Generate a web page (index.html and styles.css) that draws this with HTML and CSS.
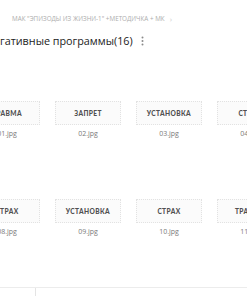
FILE: index.html
```html
<!doctype html>
<html lang="ru">
<head>
  <meta charset="UTF-8">
  <meta name="viewport" content="width=device-width, initial-scale=1">
  <title>Негативные программы</title>
  <link rel="stylesheet" href="styles.css">
</head>
<body>
  <nav class="crumbs">
    <span>МАК "Эпизоды из жизни-1" +методичка + МК</span>
    <span class="crumbs-sep">›</span>
  </nav>
  <div class="title-row">
    <h1>Негативные программы(16)</h1>
    <span class="kebab">
      <svg width="3" height="10" viewBox="0 0 3 10"><circle cx="1.5" cy="1.5" r="1"/><circle cx="1.5" cy="5" r="1"/><circle cx="1.5" cy="8.5" r="1"/></svg>
    </span>
  </div>
  <div class="file-grid">
    <div class="file"><div class="thumb">Травма</div><p>01.jpg</p></div>
    <div class="file"><div class="thumb">Запрет</div><p>02.jpg</p></div>
    <div class="file"><div class="thumb">Установка</div><p>03.jpg</p></div>
    <div class="file"><div class="thumb">Страх</div><p>04.jpg</p></div>
    <div class="file"><div class="thumb">Запрет</div><p>05.jpg</p></div>
    <div class="file"><div class="thumb">Травма</div><p>06.jpg</p></div>
    <div class="file"><div class="thumb">Установка</div><p>07.jpg</p></div>
    <div class="file"><div class="thumb">Страх</div><p>08.jpg</p></div>
    <div class="file"><div class="thumb">Установка</div><p>09.jpg</p></div>
    <div class="file"><div class="thumb">Страх</div><p>10.jpg</p></div>
    <div class="file"><div class="thumb">Травма</div><p>11.jpg</p></div>
    <div class="file"><div class="thumb">Запрет</div><p>12.jpg</p></div>
    <div class="file"><div class="thumb">Установка</div><p>13.jpg</p></div>
    <div class="file"><div class="thumb">Страх</div><p>14.jpg</p></div>
  </div>
  <footer class="bottom-bar">
    <div class="bottom-cell"></div>
  </footer>
</body>
</html>
```

FILE: styles.css
```css
body {
  margin: 0;
  padding: 0;
  width: 247px;
  height: 296px;
  overflow: hidden;
  background: #fff;
  font-family: "Open Sans", Arial, sans-serif;
  color: #222;
}

h1, p {
  margin: 0;
}

.crumbs {
  display: flex;
  align-items: center;
  gap: 5px;
  padding: 13px 0 0 12px;
  height: 11px;
  font-size: 6.3px;
  line-height: 11px;
  text-transform: uppercase;
  color: #adadad;
  white-space: nowrap;
}

.crumbs-sep {
  color: #cfcfcf;
  font-size: 8px;
}

.title-row {
  display: flex;
  align-items: center;
  gap: 8px;
  margin: 9px 0 0 -14px;
  height: 16px;
}

.title-row h1 {
  font-size: 10.8px;
  font-weight: 500;
  line-height: 16px;
  color: #222;
  white-space: nowrap;
}

.kebab {
  display: flex;
  fill: #8a8a8a;
}

.file-grid {
  display: grid;
  grid-template-columns: repeat(7, 66px);
  column-gap: 15px;
  row-gap: 60px;
  margin: 52px 0 0 -26px;
}

.file {
  display: flex;
  flex-direction: column;
  align-items: center;
  gap: 3px;
}

.thumb {
  box-sizing: border-box;
  width: 66px;
  height: 24px;
  display: flex;
  align-items: center;
  justify-content: center;
  border: 1px dotted #e2e2e2;
  background: #fbfbfb;
  font-family: Lato, Arial, sans-serif;
  font-weight: 900;
  font-size: 6.6px;
  letter-spacing: 0.4px;
  text-transform: uppercase;
  color: #505050;
}

.file p {
  font-size: 7px;
  line-height: 11px;
  color: #7a7a7a;
}

.bottom-bar {
  position: fixed;
  left: 0;
  right: 0;
  top: 287px;
  height: 9px;
  border-top: 1px solid #ececec;
}

.bottom-cell {
  width: 35px;
  height: 100%;
  border-right: 1px solid #e4e4e4;
}
```
